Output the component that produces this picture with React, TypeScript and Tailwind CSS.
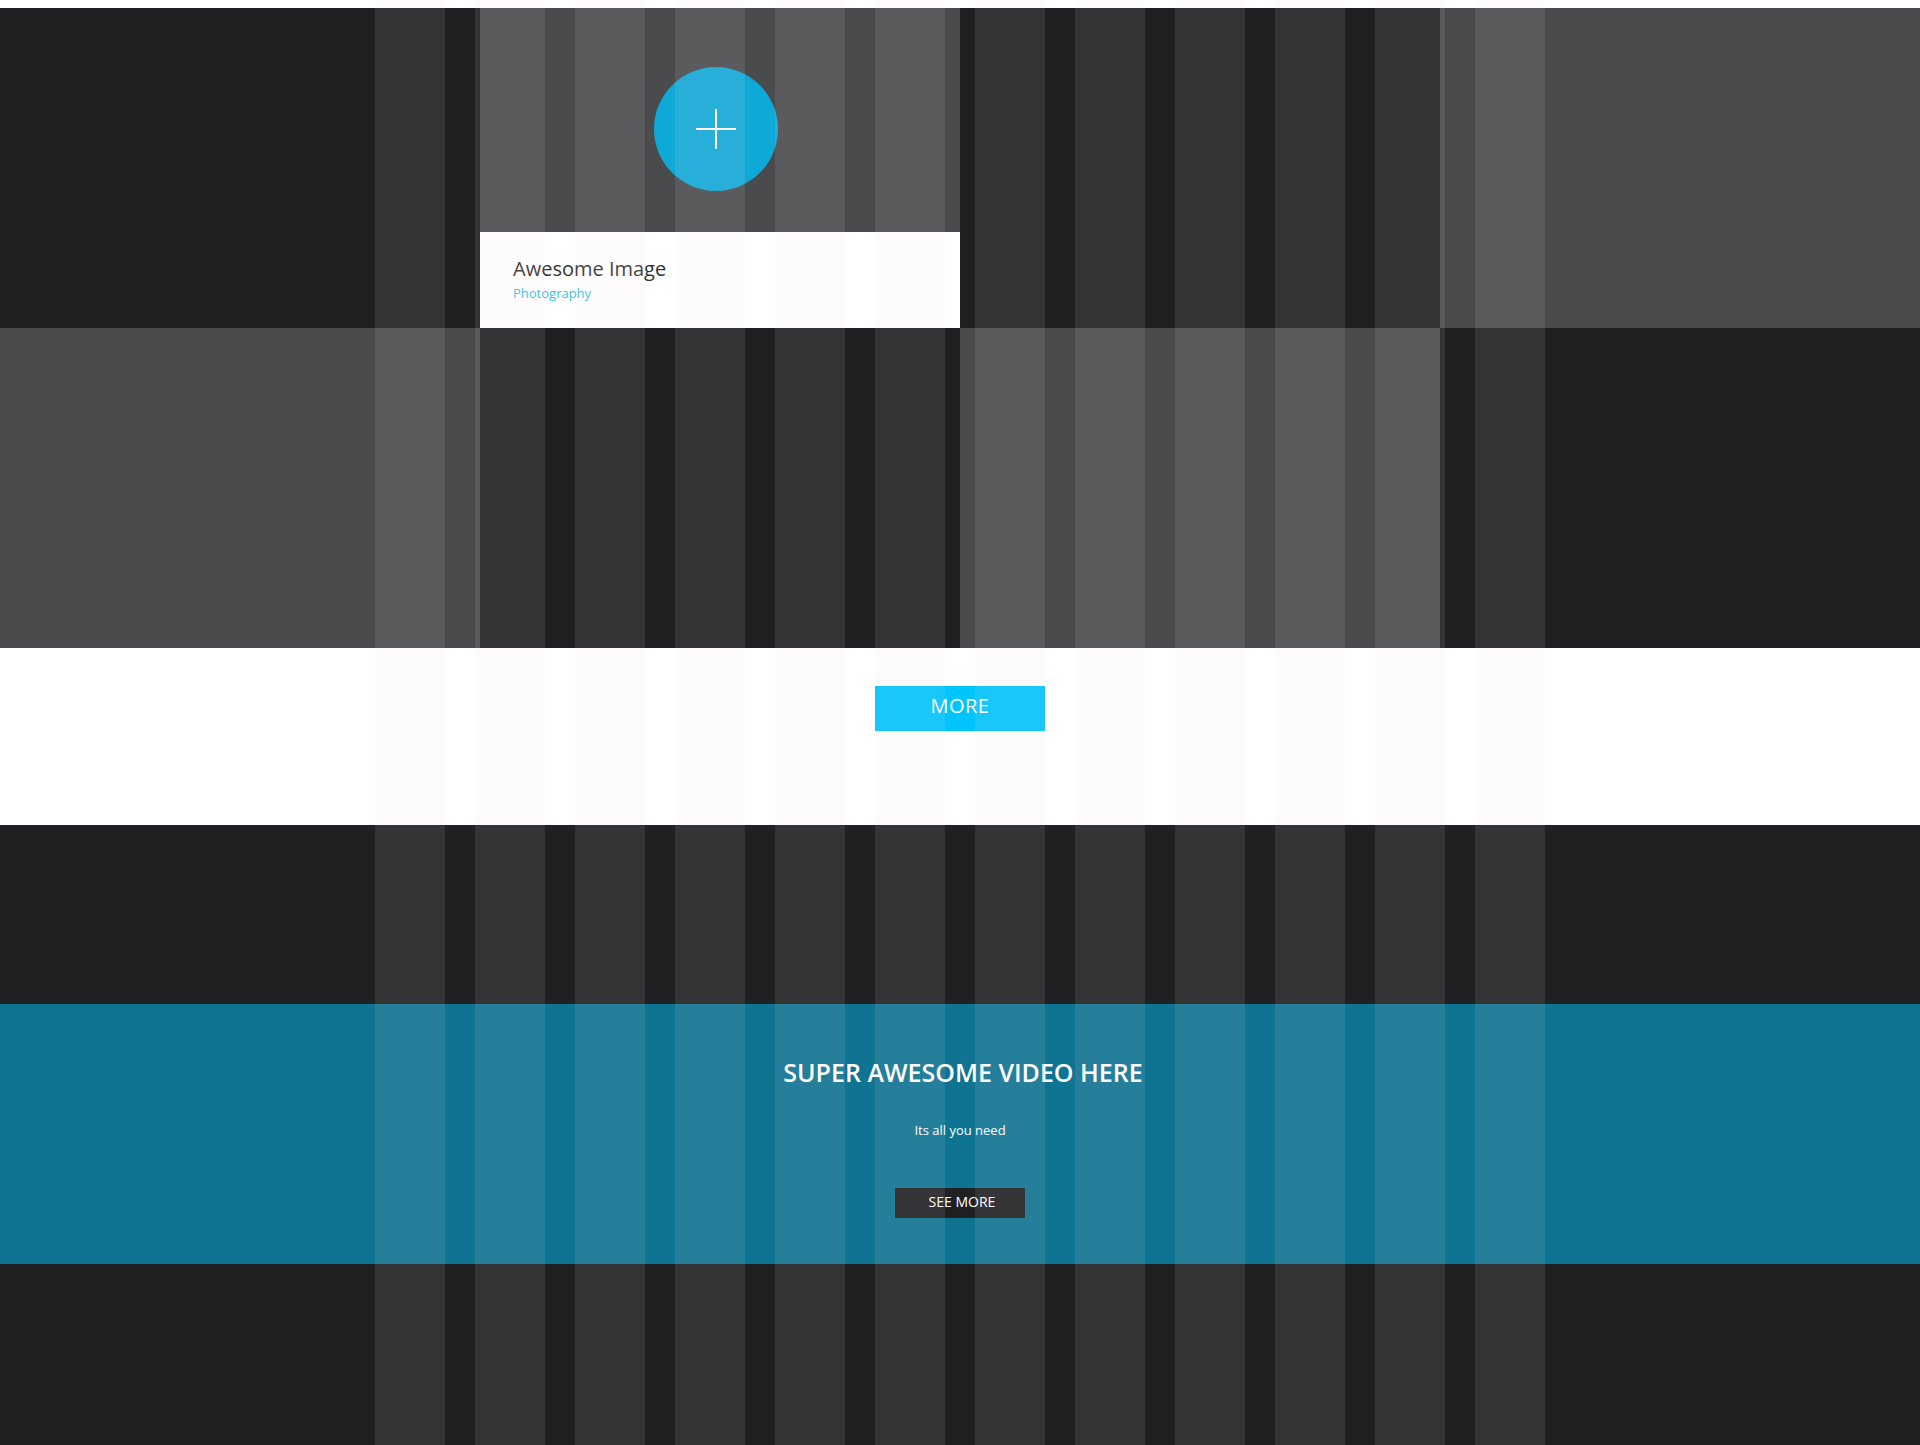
import React from "react";

const font = "font-['Open_Sans',_'Liberation_Sans',_sans-serif]";

function Tile({ tone }: { tone: "dark" | "grey" }) {
  return <div className={tone === "dark" ? "h-[320px] bg-[#1f2022]" : "h-[320px] bg-[#4a4b4d]"} />;
}

function ImageTile() {
  return (
    <div className="flex h-[320px] flex-col">
      <div className="h-[224px] bg-[#4a4b4d] pl-[174px] pt-[59px]">
        <div className="flex h-[124px] w-[124px] items-center justify-center rounded-full bg-[#0fa9d8]">
          <svg width="40" height="40" viewBox="0 0 40 40">
            <line x1="0" y1="20" x2="40" y2="20" stroke="#ffffff" strokeWidth="2" />
            <line x1="20" y1="0" x2="20" y2="40" stroke="#ffffff" strokeWidth="2" />
          </svg>
        </div>
      </div>
      <div className="h-[96px] bg-white pl-[33px] pt-[25px]">
        <div className="text-[20px] leading-[24px] text-[#333333]">Awesome Image</div>
        <div className="mt-[4px] text-[13px] leading-[16px] text-[#30c4ec]">Photography</div>
      </div>
    </div>
  );
}

export default function App() {
  return (
    <div className={`relative h-[1445px] w-full overflow-hidden bg-[#1f2022] ${font}`}>
      <div className="h-[8px] bg-white" />

      <div className="grid grid-cols-4">
        <Tile tone="dark" />
        <ImageTile />
        <Tile tone="dark" />
        <Tile tone="grey" />
        <Tile tone="grey" />
        <Tile tone="dark" />
        <Tile tone="grey" />
        <Tile tone="dark" />
      </div>

      <div className="flex h-[177px] justify-center bg-white pt-[38px]">
        <button className="h-[45px] w-[170px] bg-[#00c5fd] pb-[6px] text-[20px] font-normal leading-[28px] tracking-[0.5px] text-white">
          MORE
        </button>
      </div>

      <div className="h-[179px] bg-[#1f2022]" />

      <div className="flex h-[260px] flex-col items-center bg-[#0e7491] pt-[53px] text-white">
        <h2 className="pl-[6px] text-[25px] font-semibold leading-[30px]">SUPER AWESOME VIDEO HERE</h2>
        <p className="mt-[34px] text-[13px] leading-[18px]">Its all you need</p>
        <button className="mt-[49px] h-[30px] w-[130px] bg-[#1f2022] pb-[3px] pl-[4px] text-[14px] font-medium leading-[20px] text-white">
          SEE MORE
        </button>
      </div>

      <div className="h-[181px] bg-[#1f2022]" />

      <div className="pointer-events-none absolute inset-0">
        <div className="mx-auto flex h-full w-[1170px] gap-[30px]">
          {Array.from({ length: 12 }).map((_, i) => (
            <div key={i} className="h-full w-[70px] bg-[rgba(236,215,224,0.11)]" />
          ))}
        </div>
      </div>
    </div>
  );
}
